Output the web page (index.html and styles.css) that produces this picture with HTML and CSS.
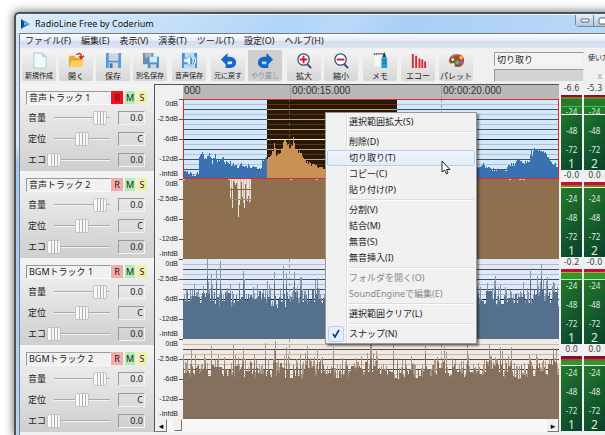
FILE: index.html
```
<!DOCTYPE html>
<html lang="ja">
<head>
<meta charset="utf-8">
<title>RadioLine Free by Coderium</title>
<link rel="stylesheet" href="styles.css">
</head>
<body>
<div class="window">
  <header class="titlebar">
    <svg class="logo" width="11" height="12" viewBox="0 0 11 12"><path d="M1 1l9 5-9 5z" fill="#2f7fc0"/><path d="M1 1l4 5-4 5z" fill="#15457c"/><path d="M4 4l5 2-5 1z" fill="#6cc0ee"/></svg>
    <h1>RadioLine Free by Coderium</h1>
    <div class="caption">
      <button aria-label="最小化"><svg width="10" height="5" viewBox="0 0 10 5"><rect x="1" y="1" width="8" height="3" rx="1" fill="#fff" stroke="#566"/></svg></button>
      <button aria-label="最大化"><svg width="9" height="8" viewBox="0 0 9 8"><rect x="1" y="1" width="7" height="6" rx="1" fill="#fff" stroke="#566"/></svg></button>
    </div>
  </header>
  <div class="client">
    <nav class="menubar">
      <button>ファイル(F)</button><button>編集(E)</button><button>表示(V)</button><button>演奏(T)</button><button>ツール(T)</button><button>設定(O)</button><button>ヘルプ(H)</button>
    </nav>
    <div class="toolbar">
      <div class="group">
        <button class="tool"><svg viewBox="0 0 18 18"><path d="M3 1h9l4 4v12H3z" fill="#eefaf9" stroke="#b9c8c8"/><path d="M12 1v4h4z" fill="#c9dcdc" stroke="#b9c8c8"/></svg>新規作成</button>
        <button class="tool big"><svg viewBox="0 0 18 18"><path d="M1 5q0-1 1-1h5l1 2h6q1 0 1 1v9H1z" fill="#eda62e"/><path d="M1 16l3-7h13l-2 7z" fill="#ffcf57"/><path d="M9 3q3-3 5 0v3M12 4l2 3 3-3" fill="none" stroke="#d3262c" stroke-width="1.5"/></svg>開く</button>
        <button class="tool big"><svg viewBox="0 0 18 18"><path d="M1 1h16v16H1z" fill="#5a9ad6"/><path d="M4 1h10v8H4z" fill="#dfe7ee"/><path d="M4 3h10M4 5h10M4 7h10" stroke="#b9c5d0"/><path d="M4 11h10v6H4z" fill="#cfd6dc"/><path d="M5 12h3v5H5z" fill="#3c78b4"/></svg>保存</button>
        <button class="tool"><svg viewBox="0 0 18 18"><path d="M1 1h11v12H1z" fill="#6f8ca8"/><path d="M3 1h7v5H3z" fill="#a9b8c6"/><path d="M6 5h12v12H6z" fill="#4a93d6"/><path d="M8 5h8v6H8z" fill="#dfe7ee"/><path d="M9 13h6v4H9z" fill="#cfd6dc"/></svg>別名保存</button>
      </div>
      <div class="group">
        <button class="tool"><svg viewBox="0 0 18 18"><path d="M1 1h16v16H1z" fill="#3f93dc"/><path d="M4 1h10v5H4zM3 13h12v4H3z" fill="#b9dcf5"/><path d="M3 7h3l4-3v11l-4-4H3z" fill="#f3f6f8" stroke="#6e8eaa" stroke-width=".6"/><path d="M12 6q2 3 0 6M14 5q3 4 0 8" fill="none" stroke="#fff" stroke-width="1.2"/></svg>音声保存</button>
      </div>
      <div class="group">
        <button class="tool"><svg viewBox="0 0 18 18"><path d="M1 8l7-7v4h3q6 1 6 6t-6 6H6v-4h5q2 0 2-2t-2-1H8v5z" fill="#1268c8"/></svg>元に戻す</button>
        <button class="tool" disabled><svg viewBox="0 0 18 18"><path d="M17 8l-7-7v4H7q-6 1-6 6t6 6h5v-4H7q-2 0-2-2t2-1h3v5z" fill="#1268c8"/></svg>やり直し</button>
      </div>
      <div class="group">
        <button class="tool big"><svg viewBox="0 0 18 18"><circle cx="8" cy="8" r="6" fill="#fff" stroke="#2d4a72" stroke-width="1.3"/><path d="M12 13l4 4" stroke="#2d4a72" stroke-width="2"/><path d="M8 4v8M4 8h8" stroke="#d3132b" stroke-width="2"/></svg>拡大</button>
        <button class="tool big"><svg viewBox="0 0 18 18"><circle cx="8" cy="8" r="6" fill="#fff" stroke="#2d4a72" stroke-width="1.3"/><path d="M12 13l4 4" stroke="#2d4a72" stroke-width="2"/><path d="M4 8h8" stroke="#d3132b" stroke-width="2"/></svg>縮小</button>
      </div>
      <div class="group last">
        <button class="tool big"><svg viewBox="0 0 18 18"><path d="M2 2h12v14H2z" fill="#f6f7f7" stroke="#d4d8da" stroke-width=".6"/><path d="M2 2h12" stroke="#333" stroke-width="2" stroke-dasharray="1 1"/><path d="M10 7l3-5 3 5v10h-6z" fill="#24a0d8"/><path d="M13 0l2 5h-4z" fill="#333"/><path d="M11 9h4M11 12h4" stroke="#0f70a8"/></svg>メモ</button>
        <button class="tool big"><svg viewBox="0 0 18 18"><path d="M3 2v15M6.500 4v13M10 7v10M13 8v9M16 10v7" stroke="#d62a36" stroke-width="2"/></svg>エコー</button>
        <button class="tool big"><svg viewBox="0 0 18 18"><path d="M9 2q8 0 8 7 0 7-7 7-4 0-3-3 0-2-2-1-4 1-4-3 1-7 8-7z" fill="#8a5a38"/><path d="M4 5q3-3 8-2" stroke="#c29a70" fill="none"/><circle cx="5" cy="8" r="1.500" fill="#eee"/><circle cx="10" cy="6" r="2" fill="#ee2020"/><circle cx="14" cy="6" r="2" fill="#f5b81c"/><circle cx="10" cy="11" r="2" fill="#3fd03f"/><circle cx="14" cy="11" r="2" fill="#b040e8"/></svg>パレット</button>
      </div>
      <div class="status">
        <input class="hint" type="text" value="切り取り" aria-label="コマンド">
        <a class="help" href="#">使い方</a>
        <input class="progress" type="text" aria-label="進行状況" disabled>
        <button class="cancel">x</button>
      </div>
    </div>
    <main class="main">
      <div class="strips" id="strips"></div>
      <div class="editor">
        <div class="ruler"><span class="start">000</span><span>00:00:15.000</span><span>00:00:20.000</span></div>
        <div class="lanes" id="lanes"></div>
        <div class="scroll"><button aria-label="左へ">◂</button><i class="thumb"></i><button aria-label="右へ">▸</button></div>
      </div>
      <div class="meters" id="meters"></div>
    </main>
  </div>
</div>
<div class="context" role="menu">
  <button role="menuitem">選択範囲拡大(S)</button>
  <hr>
  <button role="menuitem">削除(D)</button>
  <button role="menuitem" class="hover">切り取り(T)</button>
  <button role="menuitem">コピー(C)</button>
  <button role="menuitem">貼り付け(P)</button>
  <hr>
  <button role="menuitem">分割(V)</button>
  <button role="menuitem">結合(M)</button>
  <button role="menuitem">無音(S)</button>
  <button role="menuitem">無音挿入(I)</button>
  <hr>
  <button role="menuitem" disabled>フォルダを開く(O)</button>
  <button role="menuitem" disabled>SoundEngineで編集(E)</button>
  <hr>
  <button role="menuitem">選択範囲クリア(L)</button>
  <hr>
  <button role="menuitem" class="checked"><svg class="check" width="16" height="16" viewBox="0 0 16 16"><rect x=".5" y=".5" width="15" height="15" rx="2" fill="#e3effb" stroke="#aecff7"/><path d="M5 8l2 3 4-7" fill="none" stroke="#12308c" stroke-width="1.600"/></svg>スナップ(N)</button>
</div>
<svg class="cursor" width="10" height="15" viewBox="0 0 10 15"><path d="M1 1v11l2.500-2 2 4 1.500-1-1.500-3.500H9z" fill="#fff" stroke="#222"/></svg>
<script src="script.js"></script>
</body>
</html>
```
FILE: styles.css
```
* { box-sizing: border-box; }
body {
  display: flex;
  flex-direction: column;
  margin: 0;
  height: 100vh;
  overflow: hidden;
  background: #fff;
  color: #222;
  font: 9px/12px "Noto Sans", "Noto Sans CJK JP", sans-serif;
}
button, input {
  margin: 0;
  padding: 0;
  border: 0;
  background: none;
  color: inherit;
  font: inherit;
}
.window {
  flex: 1;
  display: flex;
  flex-direction: column;
  margin: 12px -8px 0 14px;
  padding: 0 0 0 3px;
  border: 1px solid #4a5158;
  border-width: 2px 0 0 2px;
  border-radius: 5px 0 0 0;
  background: linear-gradient(#cfe4f8 0, #d6e7f8 130px, #a4cbf0 150px, #b6d6f4);
  box-shadow: 0 0 9px 1px #777;
}
.titlebar {
  display: flex;
  align-items: center;
  height: 19px;
  gap: 4px;
  margin-left: -3px;
  padding-left: 4px;
  border-radius: 4px 0 0 0;
  border-top: 1px solid #e8f4ff;
  background: linear-gradient(115deg, #dcebf8 0, #c6e0f8 25%, #b0d5fa 45%, #b9dafa 55%, #a9cff5 65%, #b9d9f8);
}
.titlebar h1 { margin: 0; flex: 1; font: 9px/12px "Noto Sans", sans-serif; color: #111; }
.caption { display: flex; align-self: flex-start; border: 1px solid #77889a; border-top: 0; border-radius: 0 0 0 4px; }
.caption button { width: 18px; height: 11px; display: grid; place-items: center; background: linear-gradient(#e2edf7, #b3c8dd); border-right: 1px solid #77889a; }
.client { flex: 1; background: #f0f0f0; border: 1px solid #717a83; border-width: 1px 0 0 1px; padding-right: 8px; }
.menubar {
  display: flex;
  gap: 10px;
  height: 14px;
  padding-left: 5px;
  background: linear-gradient(#fcfdfe, #e6eaf6 50%, #d5dcef 51%, #dfe4f3);
}
.menubar button { white-space: nowrap; }
.toolbar { display: flex; gap: 5px; height: 36px; padding: 2px 0 0 2px; }
.group { display: flex; gap: 3px; }
.group.last { gap: 4px; }
.tool {
  display: flex;
  flex-direction: column;
  align-items: center;
  width: 34px;
  height: 31px;
  padding-top: 2px;
  gap: 2px;
  border-radius: 2px;
  background: linear-gradient(#f4f4f4, #d6d6d6);
  font-size: 7px;
  line-height: 9px;
  white-space: nowrap;
}
.tool svg { width: 17px; height: 17px; flex: none; }
.tool.big { font-size: 8px; }
.tool:disabled { background: #cfcfcf; color: #8c8c8c; }
.status {
  flex: 1;
  display: grid;
  grid-template-columns: minmax(0, 1fr) 17px;
  grid-template-rows: 14px 13px;
  gap: 3px 4px;
  padding: 2px 0 0 16px;
}
.status input { width: 100%; height: 100%; border: 1px solid #999; border-color: #999 #eee #eee #999; }
.hint { padding-left: 2px; background: #f4f4f4; }
.progress { background: #d3d3d3; }
.help { font-size: 7px; line-height: 11px; color: #222; text-decoration: none; white-space: nowrap; }
.cancel { color: #999; font-size: 8px; text-align: right; padding-right: 3px; }

.main { display: grid; grid-template-columns: 134px minmax(0, 1fr) 46px; }
.strip {
  height: 87px;
  padding: 7px 7px 0 6px;
  background: linear-gradient(#f4f4f4, #cfcfcf);
}
.name { display: flex; gap: 2px; height: 14px; margin-bottom: 6px; }
.name input {
  flex: 1;
  min-width: 0;
  margin-right: -2px;
  padding-left: 2px;
  border: 1px solid #999;
  border-color: #999 #f8f8f8 #f8f8f8 #999;
  background: #f1f1f1;
}
.name button { width: 10px; height: 13px; }
.name .r { width: 12px; background: #f3aaaa; }
.name .r.on { background: #fa0f1b; }
.name .m { background: #adf0ad; }
.name .s { background: #f4f0ac; }
.row { display: grid; grid-template-columns: 19px 70px 28px; height: 14px; margin: 0 0 7px 2px; align-items: center; }
.row label { white-space: nowrap; }
.row output {
  height: 14px;
  margin-left: 1px;
  padding-right: 1px;
  text-align: right;
  border: 1px solid #999;
  border-color: #999 #f4f4f4 #f4f4f4 #999;
}
.row input {
  appearance: none;
  position: relative;
  width: 100%;
  height: 14px;
  background: linear-gradient(#aaa 1px, #f4f4f4 1px) center / 56px 2px no-repeat;
}
.row input::-webkit-slider-thumb {
  appearance: none;
  width: 14px;
  height: 14px;
  border: 1px solid #c4c4c4;
  border-radius: 2px;
  background: linear-gradient(90deg, #fafafa 0 3px, #b8b8b8 3px 4px, #fafafa 4px 6px, #a8a8a8 6px 7px, #fafafa 7px 9px, #b8b8b8 9px 10px, #f4f4f4 10px);
}

.editor { display: flex; flex-direction: column; border-left: 1px solid #555; border-top: 1px solid #555; }
.ruler {
  display: grid;
  grid-template-columns: 107px 151px minmax(0, 1fr);
  height: 14px;
  margin-left: 28px;
  background: #b9b9b9;
  font: 10px/11px "Liberation Sans", sans-serif;
  color: #333;
  white-space: nowrap;
}
.ruler span { padding-left: 1px; border-left: 1px dotted #888; }
.ruler .start { border-left: 0; }
.lanes { flex: 1; }
.lane { display: flex; height: 80px; }
.scale {
  width: 28px;
  display: grid;
  grid-template-rows: 10px 20px 20px 20px 10px;
  align-items: center;
  padding-right: 5px;
  text-align: right;
  font: 7px/8px "Liberation Sans", sans-serif;
  background: linear-gradient(#555 1px, transparent 1px) right top / 4px 20px repeat-y;
}
.lane svg { flex: 1; min-width: 0; height: 80px; display: block; }
.scroll { display: flex; height: 13px; background: #f8f8f8; }
.scroll button { width: 12px; border: 1px solid #777; border-color: #eee #777 #777 #eee; background: #f0f0f0; font-family: "DejaVu Sans", sans-serif; line-height: 10px; color: #000; }
.scroll .thumb { width: 8px; margin: 0 auto 1px 7px; border: 1px solid #777; border-color: #eee #777 #777 #eee; background: #f0f0f0; }

.meters { padding: 0 0 0 2px; }
.pair { display: grid; grid-template-columns: 1fr 1fr; grid-template-rows: 11px 76px; column-gap: 2px; }
.peak { font: 8px/9px "DejaVu Sans", sans-serif; text-align: center; color: #444; }
.meter {
  display: flex;
  flex-direction: column;
  align-items: center;
  padding-top: 7px;
  border-bottom: 1px solid #f0f0f0;
  color: #dfe9df;
  font: 8px/19px "Noto Sans", sans-serif;
}
.meter b { font: 12px/9px "Noto Sans", sans-serif; }
.m1 { background: linear-gradient(#8b0c2c 2px, #807a20 2px 4px, #237a2c 4px 11px, #2fd03c 11px 12px, #237a2c 12px 19px, #e8f0e8 19px 20px, transparent 20px), linear-gradient(125deg, #26802b, #07402c); }
.m2 { background: linear-gradient(#c4102e 3px, #857c20 3px 5px, #e8f0e8 5px 6px, transparent 6px), linear-gradient(125deg, #26802b, #07402c); }
.m3 { background: linear-gradient(#c4102e 3px, #b8a820 3px 4px, #2f9630 4px 10px, #b8e8b8 10px 11px, transparent 11px), linear-gradient(125deg, #26802b, #07402c); }
.m4 { background: linear-gradient(#8b0c2c 3px, #80602a 3px 5px, #2f9630 5px 9px, #e8f0e8 9px 10px, transparent 10px), linear-gradient(125deg, #26802b, #07402c); }

.context {
  position: absolute;
  left: 325px;
  top: 112px;
  width: 152px;
  padding: 1px;
  border: 1px solid #979797;
  background: linear-gradient(90deg, transparent 20px, #e0e0e0 20px 21px, #fff 21px 22px, transparent 22px) #f1f1f1;
  box-shadow: 2px 2px 2px #0007;
}
.context button { position: relative; display: block; width: 100%; height: 16px; padding-left: 21px; text-align: left; border: 1px solid transparent; line-height: 14px; white-space: nowrap; }
.context button:disabled { color: #888; }
.context .hover { border-color: #b3d2f5; border-radius: 2px; background: linear-gradient(#eff4fa, #e2ebf6); }
.context hr { height: 2px; margin: 1px 1px 1px 22px; border: 0; border-top: 1px solid #ddd; background: #fff; }
.check { position: absolute; left: 0; top: -1px; }
.cursor { position: absolute; left: 441px; top: 160px; }
```
FILE: script.js
```
const tracks = [
  { name: "音声トラック 1", rec: true, peaks: ["-6.6", "-5.3"] },
  { name: "音声トラック 2", peaks: ["-0.0", "0.0"] },
  { name: "BGMトラック 1", peaks: ["-0.2", "-0.0"] },
  { name: "BGMトラック 2", peaks: ["0.0", "0.0"] }
];
const W = 375, H = 80;

// Repeatable noise so that the waveforms look the same on every load.
function noise(seed) {
  let s = seed;
  return () => (s = (s * 16807) % 2147483647) / 2147483647;
}
const rect = (x, y, w, h, fill) => `<rect x="${x}" y="${y}" width="${w}" height="${h}" fill="${fill}"/>`;
const bar = (x, y) => `M${x} ${H}V${y}h1V${H}z`;

function grid(x, w, minor, major, mid) {
  let out = "";
  for (let y = 5; y < H; y += 5) {
    out += rect(x, y, w, 1, y === 40 ? mid : y % 10 ? minor : major);
  }
  return out;
}
const beats = () => [106, 257].map(x => `<path d="M${x}.5 0V80" stroke="#777" stroke-opacity=".6" stroke-dasharray="3 3"/>`).join("");

// Envelope of the voice track: x, top.
const voice = [[0,73],[5,74],[10,75],[15,74],[16,57],[19,54],[22,60],[26,56],[29,63],[32,56],[34,62],[40,60],[42,64],[47,64],[54,68],[59,66],[67,67],[70,67],[75,70],[78,68],[79,61],[83,60],[87,56],[90,50],[91,44],[93,57],[97,53],[100,44],[103,42],[106,49],[109,47],[110,38],[112,50],[117,54],[120,61],[125,64],[132,66],[137,69],[142,71],[294,67],[299,65],[304,69],[315,72],[322,70],[325,65],[330,65],[335,59],[337,64],[342,64],[345,62],[347,50],[348,56],[350,48],[355,51],[360,53],[364,60],[369,64],[374,68]];

function voiceWave() {
  const rnd = noise(77);
  let left = "", sel = "", i = 0;
  for (let x = 0; x < W; x++) {
    while (i < voice.length - 2 && voice[i + 1][0] <= x) i++;
    const [x0, y0] = voice[i], [x1, y1] = voice[i + 1];
    const y = Math.round(y0 + (y1 - y0) * (x - x0) / (x1 - x0) + rnd() * 4 - 2);
    if (x >= 84 && x < 213) sel += bar(x, y); else left += bar(x, y);
  }
  return rect(0, 0, W, H, "#d2e8fd") + grid(0, W, "#b9bfc6", "#45535f", "#0c1020") +
    rect(84, 0, 129, H, "#2b1804") + grid(84, 129, "#4a3a2a", "#b9a793", "#f7f2e8") + beats() +
    `<path d="${left}" fill="#3a71b0"/><path d="${sel}" fill="#c99254"/>` +
    `<path d="M.5 .5H374.500V79.500H.5z" fill="none" stroke="#e0252d"/>`;
}

function fullWave() {
  const rnd = noise(19);
  const depth = [19,9,29,2,4,6,4,10,38,26,20,3,18,24,29,5,20,22,17,24,22];
  let out = rect(0, 0, W, H, "#8e6f4e");
  depth.forEach((d, i) => { out += rect(47 + i, 0, 1, d, i % 3 === 1 ? "#cbbba9" : "#ece4dc"); });
  out += rect(47, 10, 21, 1, "#7e6a55") + rect(47, 20, 21, 1, "#9c8770");
  for (let i = 0; i < 12; i++) out += rect(Math.floor(rnd() * W), 0, 2, 1, "#d9cdbf");
  return out;
}

function noisyWave(seed, mean, colors, tall) {
  const rnd = noise(seed);
  const [bg, minor, light, dark] = colors;
  const tops = new Map(tall);
  let faint = "", solid = "", low = mean;
  for (let x = 0; x < W; x++) {
    const swell = Math.sin(x / 9 + seed) * 2;
    if (rnd() < 0.7) low = mean + swell + rnd() * 16 - 8;
    const high = rnd() < 0.5 ? low - rnd() * 14 : low;
    const top = tops.has(x) ? tops.get(x) : Math.round(high);
    faint += bar(x, top);
    solid += bar(x, tops.has(x) ? Math.round((top + low) / 2) : Math.round(low));
  }
  return rect(0, 0, W, H, bg) + grid(0, W, minor, "#4a4a50", "#111") + beats() +
    `<path d="${faint}" fill="${light}"/><path d="${solid}" fill="${dark}"/>`;
}

const waves = [
  voiceWave(),
  fullWave(),
  noisyWave(431, 39, ["#dfe9f7", "#b4bcc8", "#8498b0", "#54708d"],
    [[24,0],[28,15],[33,10],[37,2],[60,12],[91,13],[100,7],[103,14],[111,13],[117,18],[134,19],[311,17],[346,12],[357,5],[363,18]]),
  noisyWave(907, 31, ["#f1e8e1", "#c4b9b0", "#a79787", "#84705c"],
    [[28,7],[50,6],[60,9],[82,4],[92,2],[103,8],[124,7],[150,8],[187,5],[209,6],[241,7],[260,8],[283,6],[305,5],[316,8],[327,8],[369,9]])
];

const sliders = [["音量", 82, "0.0"], ["定位", 50, "C"], ["エコー", 0, "0.0"]];
document.getElementById("strips").innerHTML = tracks.map((t, n) => `
  <section class="strip">
    <div class="name"><input type="text" value="${t.name}" aria-label="トラック名"><button class="r${t.rec ? " on" : ""}">R</button><button class="m">M</button><button class="s">S</button></div>
    ${sliders.map(([label, v, text], i) => `<div class="row"><label for="s${n}${i}">${label}</label><input id="s${n}${i}" type="range" value="${v}"><output>${text}</output></div>`).join("")}
  </section>`).join("");

document.getElementById("lanes").innerHTML = waves.map(w => `
  <div class="lane">
    <div class="scale"><span>0dB</span><span>-2.5dB</span><span>-6dB</span><span>-12dB</span><span>-InfdB</span></div>
    <svg viewBox="0 0 ${W} ${H}" preserveAspectRatio="none" shape-rendering="crispEdges">${w}</svg>
  </div>`).join("");

document.getElementById("meters").innerHTML = tracks.map((t, n) => `
  <div class="pair">
    ${t.peaks.map(p => `<div class="peak">${p}</div>`).join("")}
    ${[1, 2].map(c => `<div class="meter m${n + 1}"><span>-24</span><span>-48</span><span>-72</span><b>${c}</b></div>`).join("")}
  </div>`).join("");
```
